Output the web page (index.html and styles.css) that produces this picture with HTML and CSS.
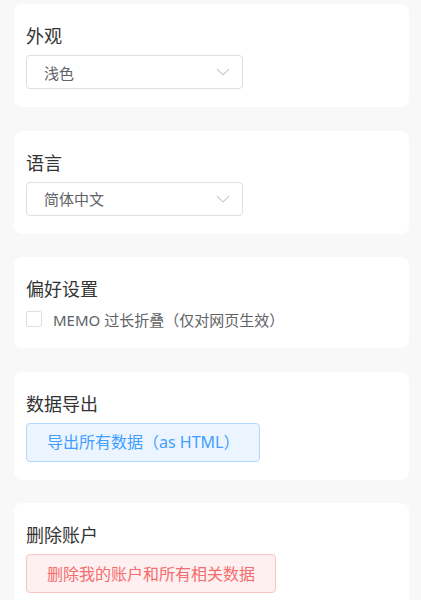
FILE: index.html
```html
<!DOCTYPE html>
<html lang="zh-CN">
<head>
<meta charset="utf-8">
<title>设置</title>
<link rel="stylesheet" href="styles.css">
</head>
<body>
<main class="page">
  <section class="card">
    <h2 class="card-title">外观</h2>
    <div class="select">
      <span class="select-value">浅色</span>
      <svg class="chevron" width="14" height="8" viewBox="0 0 14 8"><path d="M1 1.2 L7 6.8 L13 1.2" fill="none" stroke="#c0c4cc" stroke-width="1.1"/></svg>
    </div>
  </section>
  <section class="card">
    <h2 class="card-title">语言</h2>
    <div class="select">
      <span class="select-value">简体中文</span>
      <svg class="chevron" width="14" height="8" viewBox="0 0 14 8"><path d="M1 1.2 L7 6.8 L13 1.2" fill="none" stroke="#c0c4cc" stroke-width="1.1"/></svg>
    </div>
  </section>
  <section class="card">
    <h2 class="card-title">偏好设置</h2>
    <label class="check-row">
      <span class="checkbox"></span>
      <span class="check-label">MEMO 过长折叠（仅对网页生效）</span>
    </label>
  </section>
  <section class="card">
    <h2 class="card-title">数据导出</h2>
    <div class="btn-row"><button class="btn btn-primary">导出所有数据（as HTML）</button></div>
  </section>
  <section class="card">
    <h2 class="card-title">删除账户</h2>
    <div class="btn-row"><button class="btn btn-danger">删除我的账户和所有相关数据</button></div>
  </section>
</main>
</body>
</html>
```

FILE: styles.css
```css
* { box-sizing: border-box; }
html, body {
  margin: 0;
  background: #f8f8f8;
}
body {
  font-family: "Noto Sans", "Noto Sans CJK SC", sans-serif;
  color: #333;
}
.page {
  display: flex;
  flex-direction: column;
  gap: 23.5px;
  padding: 4px 12px 40px 14px;
}
.card {
  background: #fff;
  border-radius: 8px;
  padding: 20px 12px 18px 12px;
  display: flex;
  flex-direction: column;
  gap: 7px;
}
.card-title {
  margin: 0;
  font-size: 18px;
  font-weight: 400;
  line-height: 24px;
  color: #333;
}
.select {
  width: 217px;
  height: 34px;
  border: 1px solid #dcdfe6;
  border-radius: 4px;
  display: flex;
  align-items: center;
  justify-content: space-between;
  padding: 0 12px 0 17px;
  background: #fff;
}
.select-value {
  font-size: 15px;
  color: #606266;
}
.chevron { display: block; }
.check-row {
  display: flex;
  align-items: center;
  height: 22px;
  gap: 11px;
}
.checkbox {
  width: 16px;
  height: 16px;
  border: 1px solid #dcdfe6;
  border-radius: 2px;
  background: #fff;
}
.check-label {
  font-size: 15px;
  color: #606266;
}
.btn-row { display: flex; }
.btn {
  font-family: inherit;
  font-size: 16px;
  height: 39px;
  padding: 0 20px;
  border-radius: 4px;
  border: 1px solid;
  line-height: 1;
}
.btn-primary {
  background: #ecf5ff;
  border-color: #b3d8ff;
  color: #409eff;
}
.btn-danger {
  background: #fef0f0;
  border-color: #fbc4c4;
  color: #f56c6c;
}
```
